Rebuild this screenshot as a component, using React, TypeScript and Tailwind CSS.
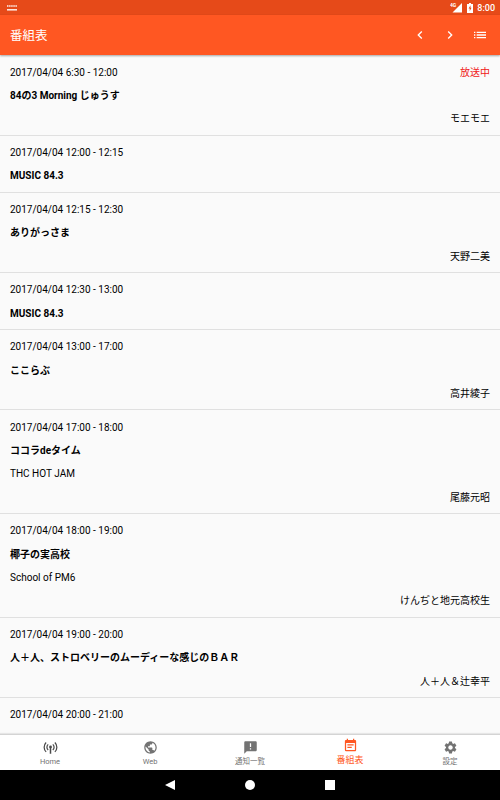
import {
  MdAnnouncement,
  MdChevronLeft,
  MdChevronRight,
  MdEventNote,
  MdList,
  MdPublic,
  MdSettings,
} from "react-icons/md";

const programs = [
  { time: "2017/04/04 6:30 - 12:00", title: "84の3 Morning じゅうす", cast: "モエモエ", onAir: true },
  { time: "2017/04/04 12:00 - 12:15", title: "MUSIC 84.3" },
  { time: "2017/04/04 12:15 - 12:30", title: "ありがっさま", cast: "天野二美" },
  { time: "2017/04/04 12:30 - 13:00", title: "MUSIC 84.3" },
  { time: "2017/04/04 13:00 - 17:00", title: "ここらぶ", cast: "高井綾子" },
  { time: "2017/04/04 17:00 - 18:00", title: "ココラdeタイム", sub: "THC HOT JAM", cast: "尾藤元昭" },
  { time: "2017/04/04 18:00 - 19:00", title: "椰子の実高校", sub: "School of PM6", cast: "けんぢと地元高校生" },
  { time: "2017/04/04 19:00 - 20:00", title: "人＋人、ストロベリーのムーディーな感じのＢＡＲ", cast: "人＋人＆辻幸平" },
  { time: "2017/04/04 20:00 - 21:00", title: "" },
];

const AntennaIcon = ({ size }: any) => (
  <svg width={size} height={size} viewBox="0 0 24 24" fill="none" stroke="#4a4a4a" strokeWidth="2">
    <path d="M5 4a10.5 10.5 0 0 0 0 15M19 4a10.5 10.5 0 0 1 0 15M8.3 7a6 6 0 0 0 0 9M15.7 7a6 6 0 0 1 0 9" />
    <circle cx="12" cy="11" r="2.2" fill="#4a4a4a" stroke="none" />
    <path d="M12 11v11" strokeWidth="2.4" />
  </svg>
);

const StatusBar = () => (
  <div className="flex h-[15px] shrink-0 items-center justify-between bg-[#e64a19] pl-[7px] pr-[5px] text-white">
    <svg width="10" height="6" viewBox="0 0 10 6" fill="none" stroke="currentColor">
      <path d="M0 1h10" strokeWidth="2" strokeDasharray="1.5 .6" opacity=".7" />
      <path d="M0 4.8h10" strokeWidth="1.6" opacity=".85" />
    </svg>
    <div className="flex items-center">
      <svg width="12" height="10" viewBox="0 0 12 10" fill="currentColor">
        <path d="M12 0v9.5H2.5z" />
        <text x="0" y="4" fontSize="5" fontWeight="700">4G</text>
      </svg>
      <svg className="ml-[5px]" width="6" height="10" viewBox="0 0 6 10">
        <path d="M2 0h2v1h2v9H0V1h2z" fill="white" />
        <path d="M3.5 2.2L1.6 5.6h1.1v2.6l1.8-3.5H3.5z" fill="#e64a19" />
      </svg>
      <p className="ml-[4px] pt-px text-[9px] leading-[15px] font-medium">8:00</p>
    </div>
  </div>
);

const ProgramRow = ({ data }: any) => (
  <div className="shrink-0 border-b border-[#e0e0e0] px-2.5 pt-[5.33px] pb-[4px] leading-[23.33px]">
    <div className="flex justify-between">
      <p>{data.time}</p>
      {data.onAir && <p className="text-[#f01818]">放送中</p>}
    </div>
    <p className="h-[23.33px] font-bold">{data.title}</p>
    {data.sub && <p>{data.sub}</p>}
    {data.cast && <p className="text-right">{data.cast}</p>}
  </div>
);

const TabItem = ({ icon, label, active }: any) => (
  <div
    className={
      active
        ? "flex w-[100px] flex-col items-center gap-px pt-[3px] text-[9px] leading-[12px] text-[#ff5722]"
        : "flex w-[100px] flex-col items-center gap-px pt-[5px] text-[7.5px] leading-[12px] text-[#737373]"
    }
  >
    {icon}
    <p>{label}</p>
  </div>
);

const App = () => {
  return (
    <div className="flex h-[800px] w-[500px] flex-col overflow-hidden bg-[#fafafa] font-[Roboto,'Noto_Sans_CJK_JP',sans-serif] text-[10px] text-black">
      <StatusBar />
      <header className="z-10 flex h-[40px] shrink-0 items-center justify-between bg-[#ff5722] pl-2.5 pr-[12px] text-white shadow-[0_1px_2px_rgba(0,0,0,0.35)]">
        <h1 className="pt-[2px] text-[12.5px]">番組表</h1>
        <div className="flex items-center gap-[14px]">
          <MdChevronLeft size={16} />
          <MdChevronRight size={16} />
          <MdList size={16} />
        </div>
      </header>
      <main className="flex min-h-0 flex-1 flex-col overflow-hidden pt-[0.35px]">
        {programs.map((program) => (
          <ProgramRow key={program.time} data={program} />
        ))}
      </main>
      <nav className="z-10 flex h-[36px] shrink-0 border-t border-[#d4d4d4] bg-white shadow-[0_-1px_1px_rgba(0,0,0,0.08)]">
        <TabItem icon={<AntennaIcon size={15} />} label="Home" />
        <TabItem icon={<MdPublic size={15} />} label="Web" />
        <TabItem icon={<MdAnnouncement size={15} />} label="通知一覧" />
        <TabItem icon={<MdEventNote size={15} />} label="番組表" active />
        <TabItem icon={<MdSettings size={15} />} label="設定" />
      </nav>
      <div className="flex h-[30px] shrink-0 items-center justify-center gap-[70px] bg-black">
        <svg width="10" height="10" viewBox="0 0 10 10" fill="white">
          <path d="M10 0v10L0 5z" />
        </svg>
        <div className="size-2.5 rounded-full bg-white" />
        <div className="size-2.5 bg-white" />
      </div>
    </div>
  );
};

export default App;
